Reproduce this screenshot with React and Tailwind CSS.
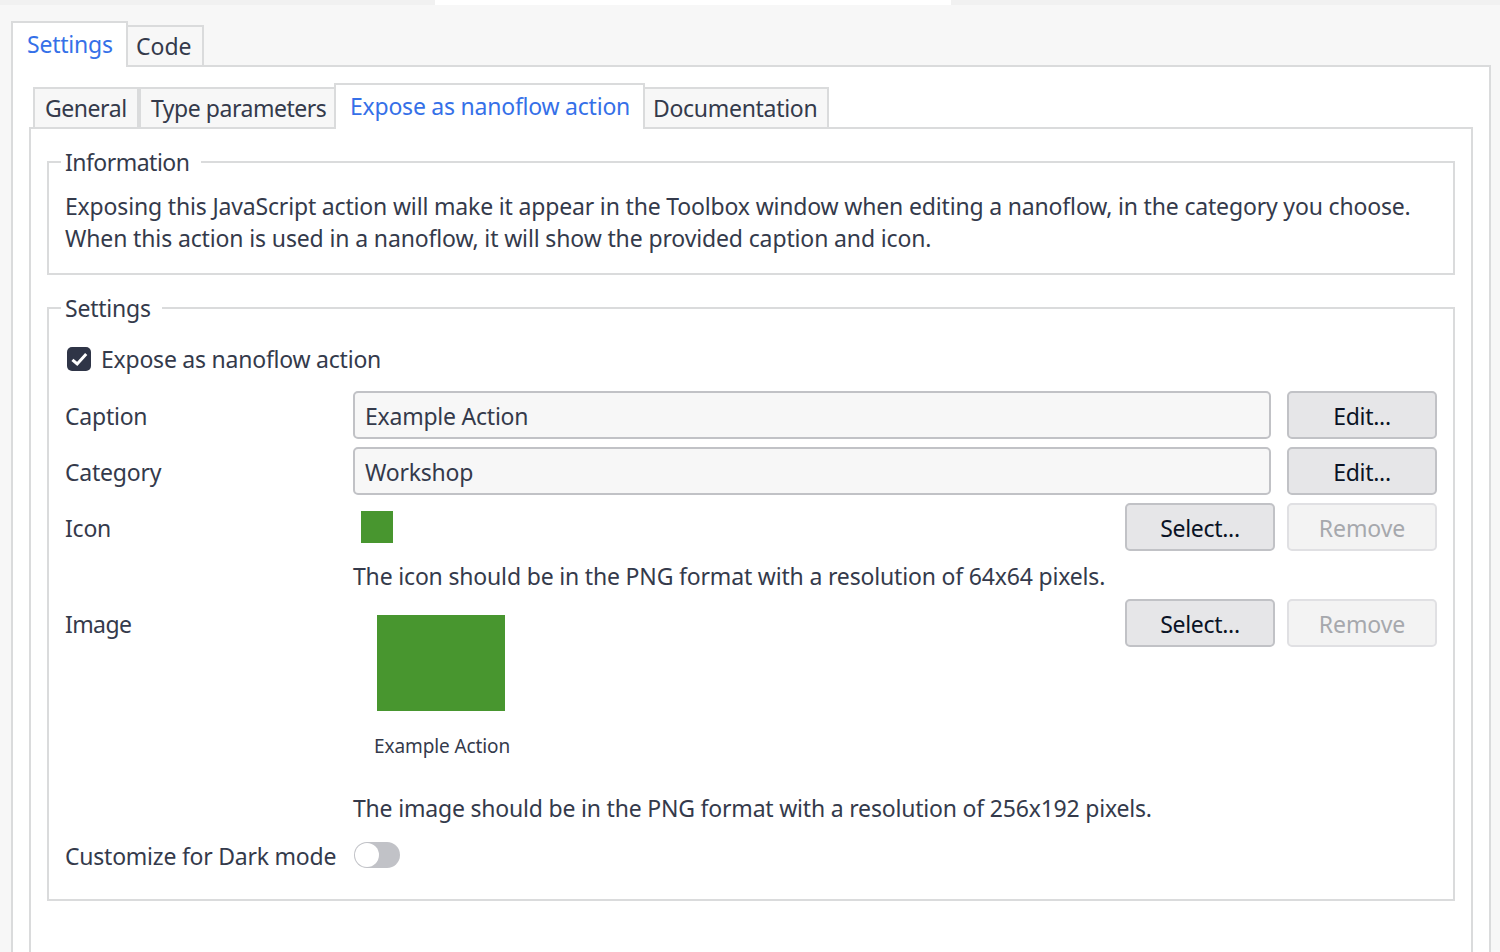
const BUTTON =
  "flex h-12 w-[150px] items-center justify-center rounded-[5px] border-2 pt-[2px] text-[23px] leading-8";

function Button({ children, disabled }) {
  return (
    <button
      disabled={disabled}
      className={
        BUTTON +
        (disabled
          ? " border-[#e0e0e3] bg-[#f3f3f3] text-[#a6a8ad] tracking-[-0.1px]"
          : " border-[#c1c2c6] bg-[#e6e6e8] text-[#0a1325] tracking-[-0.3px]")
      }
    >
      {children}
    </button>
  );
}

function Tab({ children, active, className }) {
  return (
    <div
      className={
        "whitespace-nowrap border-2 border-[#dadbdc] " +
        (active
          ? "z-10 h-[46px] border-b-0 bg-white pt-[5px] text-[#3570e8] "
          : "h-[42px] bg-[#f7f7f7] pt-[3px] ") +
        className
      }
    >
      {children}
    </div>
  );
}

function Group({ title, legendClass, className, children }) {
  return (
    <fieldset className={"min-w-0 border-2 border-[#dadbdc] " + className}>
      <legend className={"ml-3 h-8 whitespace-nowrap pl-1 " + legendClass}>{title}</legend>
      {children}
    </fieldset>
  );
}

function Row({ label, className, children }) {
  return (
    <div className={"flex items-start " + className}>
      <div className="w-[288px] shrink-0 whitespace-nowrap pt-[9px]">{label}</div>
      {children}
    </div>
  );
}

function Field({ children }) {
  return (
    <div className="mr-4 h-12 w-[918px] rounded-[5px] border-2 border-[#c1c2c6] bg-[#f7f7f7] pl-[10px] pt-[7px]">
      {children}
    </div>
  );
}

export default function App() {
  return (
    <div className="flex h-[952px] w-[1500px] flex-col overflow-hidden bg-[#f7f7f7] font-['Noto_Sans',sans-serif] text-[23px] leading-8 tracking-[-0.23px] text-[#343a4b]">
      <div className="h-[5px] shrink-0 bg-[#f1f1f1] pl-[435px]">
        <div className="h-full w-[516px] bg-white" />
      </div>

      <div className="relative z-10 -mb-[2px] mt-4 flex shrink-0 items-end pl-[11px]">
        <Tab active className="w-[117px] pl-[14px]">Settings</Tab>
        <Tab className="-ml-[2px] w-[78px] pl-2 tracking-normal">Code</Tab>
      </div>

      <div className="ml-[11px] flex w-[1480px] grow flex-col border-2 border-b-0 border-[#dadbdc] bg-white pt-4">
        <div className="relative z-10 -mb-[2px] flex shrink-0 items-end pl-5">
          <Tab className="w-[106px] pl-[10px] tracking-[-0.45px]">General</Tab>
          <Tab className="w-[197px] pl-[10px] tracking-[-0.47px]">Type parameters</Tab>
          <Tab active className="-ml-[2px] w-[311px] pl-[14px]">Expose as nanoflow action</Tab>
          <Tab className="-ml-[2px] w-[186px] pl-2 tracking-[-0.3px]">Documentation</Tab>
        </div>

        <div className="ml-4 w-[1444px] grow border-2 border-b-0 border-[#dadbdc] px-4 pt-[17px]">
          <Group title="Information" legendClass="w-[140px] tracking-[-0.52px]" className="h-[129px]">
            <div className="whitespace-nowrap pl-4 pt-3">
              <p className="tracking-[-0.168px]">Exposing this JavaScript action will make it appear in the Toolbox window when editing a nanoflow, in the category you choose.</p>
              <p className="tracking-[-0.132px]">When this action is used in a nanoflow, it will show the provided caption and icon.</p>
            </div>
          </Group>

          <Group title="Settings" legendClass="w-[101px]" className="mt-[17px] h-[609px]">
            <div className="flex flex-col pl-4">
              <div className="mt-[19px] flex h-8 items-center pl-[2px]">
                <span className="mr-[10px] mt-[-1px] flex h-6 w-6 items-center justify-center rounded-[5px] bg-[#2f3547]">
                  <svg viewBox="0 0 24 24" className="h-6 w-6" fill="none" stroke="#fff" strokeWidth="3">
                    <path d="M5.4 12.8 10.2 17 19.2 7" />
                  </svg>
                </span>
                <span className="whitespace-nowrap">Expose as nanoflow action</span>
              </div>

              <Row label="Caption" className="mt-4 h-14">
                <Field>Example Action</Field>
                <Button>Edit...</Button>
              </Row>
              <Row label="Category" className="h-14">
                <Field>Workshop</Field>
                <Button>Edit...</Button>
              </Row>
              <Row label="Icon" className="h-14">
                <div className="ml-2 mr-[732px] mt-2 h-8 w-8 bg-[#48962f]" />
                <Button>Select...</Button>
                <div className="w-3" />
                <Button disabled>Remove</Button>
              </Row>
              <p className="h-10 whitespace-nowrap pl-[288px] pt-[1px] tracking-[-0.175px]">
                The icon should be in the PNG format with a resolution of 64x64 pixels.
              </p>
              <Row label={<span className="tracking-[-0.6px]">Image</span>} className="h-[192px]">
                <div className="mr-[596px] w-[176px] pt-4">
                  <div className="ml-6 h-24 w-32 bg-[#48962f]" />
                  <div className="mt-[19px] whitespace-nowrap pl-[21px] text-[19px] leading-8 tracking-[-0.1px]">Example Action</div>
                </div>
                <Button>Select...</Button>
                <div className="w-3" />
                <Button disabled>Remove</Button>
              </Row>
              <p className="h-12 whitespace-nowrap pl-[288px] pt-[1px] tracking-[-0.195px]">
                The image should be in the PNG format with a resolution of 256x192 pixels.
              </p>
              <div className="flex h-8 items-start">
                <span className="w-[289px] whitespace-nowrap pt-[1px]">Customize for Dark mode</span>
                <span className="mt-[3px] flex h-[26px] w-[46px] items-center rounded-full bg-[#c1c2c7] pl-[1px]">
                  <span className="h-6 w-6 rounded-full bg-white" />
                </span>
              </div>
            </div>
          </Group>
        </div>
      </div>
    </div>
  );
}
